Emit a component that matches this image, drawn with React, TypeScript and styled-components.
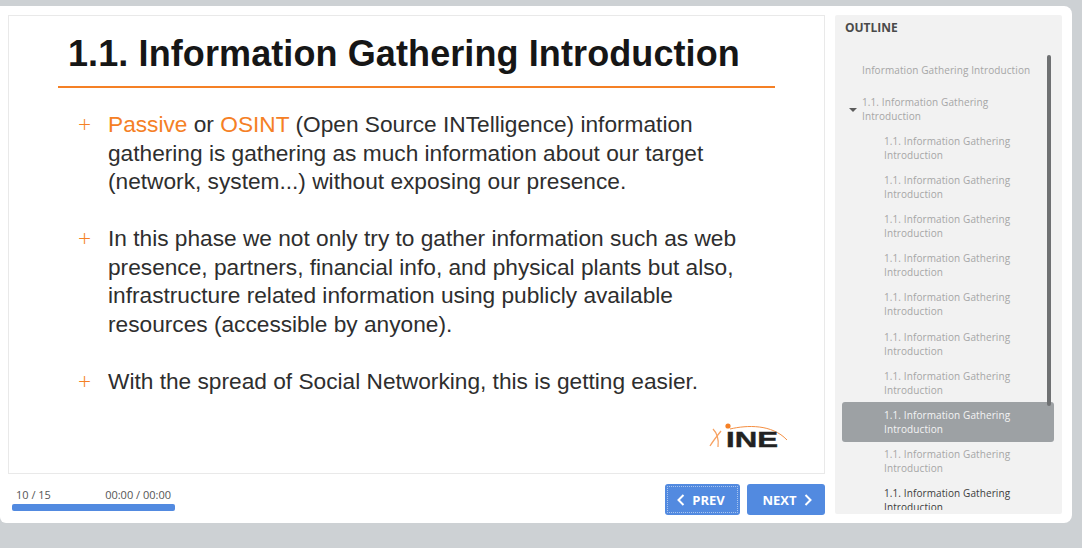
import React from "react";
import styled, { createGlobalStyle } from "styled-components";

const Global = createGlobalStyle`
  html, body {
    margin: 0;
    padding: 0;
    height: 548px;
    overflow: hidden;
    background: #cdd1d4;
  }
  * { box-sizing: border-box; }
`;

const Card = styled.div`
  margin-top: 6px;
  width: 1072px;
  height: 517px;
  background: #fff;
  border-radius: 0 8px 8px 6px;
  padding: 9px 10px 9px 8px;
  display: flex;
  gap: 10px;
`;

const Main = styled.div`
  width: 817px;
  display: flex;
  flex-direction: column;
`;

const Slide = styled.div`
  flex: none;
  height: 459px;
  border: 1px solid #e9e9e9;
  padding: 17px 49px 0;
  font-family: "Liberation Sans", Arial, sans-serif;
  display: flex;
  flex-direction: column;
`;

const Title = styled.h1`
  margin: 0;
  padding-left: 10px;
  height: 55px;
  font-size: 36px;
  line-height: 42px;
  letter-spacing: 0.1px;
  font-weight: 700;
  color: #161616;
  border-bottom: 2px solid #f58025;
  width: 717px;
  white-space: nowrap;
`;

const Bullets = styled.ul`
  list-style: none;
  margin: 22px 0 0;
  padding: 0 0 0 20px;
  width: 680px;
  display: flex;
  flex-direction: column;
  gap: 28.5px;
`;

const Bullet = styled.li`
  display: flex;
  font-size: 22.7px;
  line-height: 28.5px;
  color: #2e2e2e;
`;

const Plus = styled.span`
  flex: none;
  width: 30px;
  color: #f58025;
  font-family: "Open Sans", sans-serif;
  font-weight: 300;
  font-size: 23px;
`;

const Accent = styled.span`
  color: #f58025;
`;

const LogoRow = styled.div`
  display: flex;
  justify-content: flex-end;
  padding: 24px 0 0;
  margin-right: -12px;
`;

const Footer = styled.div`
  flex: 1;
  display: flex;
  justify-content: space-between;
  padding-top: 10px;
`;

const Progress = styled.div`
  width: 163px;
  margin: 4px 0 0 4px;
`;

const Times = styled.div`
  display: flex;
  justify-content: space-between;
  padding: 0 4px 0 4px;
  font-family: "Open Sans", sans-serif;
  font-size: 11px;
  line-height: 14px;
  color: #555;
`;

const Bar = styled.div`
  height: 7px;
  margin-top: 2px;
  background: #528ae0;
  border-radius: 2px;
`;

const Buttons = styled.div`
  display: flex;
  gap: 7px;
`;

const NavButton = styled.button<{ $focused?: boolean }>`
  width: ${(p) => (p.$focused ? 75 : 78)}px;
  height: 31px;
  border: none;
  border-radius: 3px;
  background: #528ae0;
  color: #fff;
  font-family: "Open Sans", sans-serif;
  font-weight: 700;
  font-size: 13px;
  display: flex;
  align-items: center;
  justify-content: center;
  gap: 7px;
  padding: ${(p) => (p.$focused ? "0 3px 0 0" : "0 0 0 2px")};
  outline: ${(p) => (p.$focused ? "1px dotted #a9c5ef" : "none")};
  outline-offset: -3px;
`;

const Sidebar = styled.aside`
  position: relative;
  width: 227px;
  height: 499px;
  background: #f2f2f2;
  border-radius: 2px;
  overflow: hidden;
  font-family: "Open Sans", sans-serif;
`;

const SideTitle = styled.div`
  padding: 5px 0 0 10px;
  height: 40px;
  font-size: 12px;
  line-height: 16px;
  font-weight: 700;
  color: #4a4a4a;
`;

const Thumb = styled.div`
  position: absolute;
  top: 40px;
  right: 11px;
  width: 4px;
  height: 351px;
  background: #6f7173;
  border-radius: 3px;
  z-index: 1;
`;

const Outline = styled.div`
  display: flex;
  flex-direction: column;
  height: 455px;
  overflow: hidden;
  padding-top: 8px;
  font-size: 10px;
  line-height: 14px;
  letter-spacing: 0.1px;
  color: #a6a6a6;
`;

const Root = styled.div`
  padding-left: 27px;
  margin-bottom: 11px;
  white-space: nowrap;
`;

const Section = styled.div`
  position: relative;
  padding: 7px 40px 0 27px;
  margin-bottom: 5px;
`;

const Caret = styled.span`
  position: absolute;
  left: 14px;
  top: 20px;
  width: 0;
  height: 0;
  border-left: 4px solid transparent;
  border-right: 4px solid transparent;
  border-top: 4px solid #5c5c5c;
`;

const Item = styled.div<{ $state?: "active" | "next" }>`
  flex: none;
  margin: 0 8px 0 7px;
  padding: 5.6px 30px 5.6px 42px;
  height: 39.2px;
  border-radius: 3px;
  background: ${(p) => (p.$state === "active" ? "#9da1a4" : "transparent")};
  color: ${(p) =>
    p.$state === "active" ? "#f4f4f4" : p.$state === "next" ? "#3c3c3c" : "#a6a6a6"};
`;

function Logo() {
  return (
    <svg width="80" height="30" viewBox="0 0 80 30">
      <path d="M3 27 C6 22 10 17 14 12" fill="none" stroke="#f7a263" strokeWidth="1.3" />
      <path d="M6 10 C10 14 12 20 11 28" fill="none" stroke="#f7a263" strokeWidth="1.3" />
      <path d="M23 10 C40 6 65 5 80 21" fill="none" stroke="#f58f42" strokeWidth="1" />
      <circle cx="21" cy="7" r="2.6" fill="#f58025" />
      <text
        x="19"
        y="27.5"
        fontFamily="Liberation Sans, sans-serif"
        fontWeight="700"
        fontSize="22.5"
        textLength="52"
        lengthAdjust="spacingAndGlyphs"
        fill="#222"
        stroke="#222"
        strokeWidth="0.4"
      >
        INE
      </text>
    </svg>
  );
}

function Chevron({ left }: { left?: boolean }) {
  return (
    <svg width="8" height="12" viewBox="0 0 8 12">
      <path
        d={left ? "M6.5 1 L1.5 6 L6.5 11" : "M1.5 1 L6.5 6 L1.5 11"}
        fill="none"
        stroke="#fff"
        strokeWidth="2"
      />
    </svg>
  );
}

const itemLabel = "1.1. Information Gathering Introduction";
const items: Array<"active" | "next" | undefined> = [
  undefined,
  undefined,
  undefined,
  undefined,
  undefined,
  undefined,
  undefined,
  "active",
  undefined,
  "next",
];

export default function App() {
  return (
    <>
      <Global />
      <Card>
        <Main>
          <Slide>
            <Title>1.1. Information Gathering Introduction</Title>
            <Bullets>
              <Bullet>
                <Plus>+</Plus>
                <span>
                  <Accent>Passive</Accent> or <Accent>OSINT</Accent> (Open Source INTelligence)
                  information gathering is gathering as much information about our target (network,
                  system...) without exposing our presence.
                </span>
              </Bullet>
              <Bullet>
                <Plus>+</Plus>
                <span>
                  In this phase we not only try to gather information such as web presence,
                  partners, financial info, and physical plants but also, infrastructure related
                  information using publicly available resources (accessible by anyone).
                </span>
              </Bullet>
              <Bullet>
                <Plus>+</Plus>
                <span>With the spread of Social Networking, this is getting easier.</span>
              </Bullet>
            </Bullets>
            <LogoRow>
              <Logo />
            </LogoRow>
          </Slide>
          <Footer>
            <Progress>
              <Times>
                <span>10 / 15</span>
                <span>00:00 / 00:00</span>
              </Times>
              <Bar />
            </Progress>
            <Buttons>
              <NavButton $focused>
                <Chevron left />
                PREV
              </NavButton>
              <NavButton>
                NEXT
                <Chevron />
              </NavButton>
            </Buttons>
          </Footer>
        </Main>
        <Sidebar>
          <SideTitle>OUTLINE</SideTitle>
          <Thumb />
          <Outline>
            <Root>Information Gathering Introduction</Root>
            <Section>
              <Caret />
              {itemLabel}
            </Section>
            {items.map((state, i) => (
              <Item key={i} $state={state}>
                {itemLabel}
              </Item>
            ))}
          </Outline>
        </Sidebar>
      </Card>
    </>
  );
}
